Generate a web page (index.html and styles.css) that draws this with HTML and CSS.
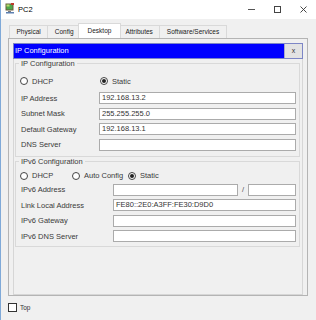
FILE: index.html
```html
<!DOCTYPE html>
<html>
  <head>
    <title>PC2</title>
    <meta charset="UTF-8" />
    <link rel="stylesheet" href="styles.css">
  </head>
  <body>
    <div class="window">
      <div class="titlebar">
        <svg class="app-icon" width="10" height="11" viewBox="0 0 10 11">
          <rect x="0.5" y="0.5" width="8" height="7" fill="#6b5a3a" />
          <rect x="1.5" y="1.5" width="6" height="5" fill="#4fa84a" />
          <rect x="1.5" y="1.5" width="3" height="2" fill="#b8d86a" />
          <rect x="3" y="8" width="3" height="1" fill="#7a7a7a" />
          <rect x="1" y="9" width="8" height="1.5" fill="#5c7fb0" />
          <rect x="6" y="0" width="3" height="2" fill="#c0392b" />
        </svg>
        <span class="title">PC2</span>
        <div class="controls">
          <span class="ctl"><span class="ctl-min"></span></span>
          <span class="ctl"><span class="ctl-max"></span></span>
          <span class="ctl">
            <svg width="7" height="7" viewBox="0 0 7 7">
              <path d="M0.5 0.5 L6.5 6.5 M6.5 0.5 L0.5 6.5" stroke="#333" stroke-width="0.9" />
            </svg>
          </span>
        </div>
      </div>

      <div class="tabs">
        <div class="tab">Physical</div>
        <div class="tab">Config</div>
        <div class="tab active">Desktop</div>
        <div class="tab">Attributes</div>
        <div class="tab">Software/Services</div>
      </div>

      <div class="panel">
        <div class="dialog">
          <div class="dialog-head">
            <div class="dialog-title">IP Configuration</div>
            <div class="dialog-close">x</div>
          </div>

          <fieldset class="group group-v4">
            <legend>IP Configuration</legend>
            <div class="radio-row">
              <label class="radio w80"><span class="dot"></span>DHCP</label>
              <label class="radio"><span class="dot checked"></span>Static</label>
            </div>
            <div class="field">
              <span class="label">IP Address</span>
              <div class="input">192.168.13.2</div>
            </div>
            <div class="field">
              <span class="label">Subnet Mask</span>
              <div class="input">255.255.255.0</div>
            </div>
            <div class="field">
              <span class="label">Default Gateway</span>
              <div class="input">192.168.13.1</div>
            </div>
            <div class="field">
              <span class="label">DNS Server</span>
              <div class="input"></div>
            </div>
          </fieldset>

          <fieldset class="group group-v6">
            <legend>IPv6 Configuration</legend>
            <div class="radio-row">
              <label class="radio w52"><span class="dot"></span>DHCP</label>
              <label class="radio w56"><span class="dot"></span>Auto Config</label>
              <label class="radio"><span class="dot checked"></span>Static</label>
            </div>
            <div class="field">
              <span class="label">IPv6 Address</span>
              <div class="input"></div>
              <span class="slash">/</span>
              <div class="input prefix"></div>
            </div>
            <div class="field">
              <span class="label">Link Local Address</span>
              <div class="input">FE80::2E0:A3FF:FE30:D9D0</div>
            </div>
            <div class="field">
              <span class="label">IPv6 Gateway</span>
              <div class="input"></div>
            </div>
            <div class="field">
              <span class="label">IPv6 DNS Server</span>
              <div class="input"></div>
            </div>
          </fieldset>
        </div>
      </div>

      <div class="footer">
        <span class="checkbox"></span>
        <span class="footer-text">Top</span>
      </div>
    </div>
  </body>
</html>
```

FILE: styles.css
```css
body {
  margin: 0;
  font-family: "Liberation Sans", Arial, sans-serif;
  color: #333;
}

.window {
  width: 315px;
  height: 320px;
  border-left: 1px solid #7fa9d8;
  background-color: #f0f0f0;
  overflow: hidden;
}

.titlebar {
  display: flex;
  align-items: center;
  height: 19px;
  background-color: #fff;
  padding-left: 4px;
}

.app-icon {
  margin-top: -2px;
}

.title {
  font-size: 7.5px;
  color: #000;
  margin-left: 3px;
}

.controls {
  display: flex;
  margin-left: auto;
  height: 100%;
}

.ctl {
  display: flex;
  align-items: center;
  justify-content: center;
  width: 26px;
  height: 100%;
}

.ctl-min {
  width: 7px;
  height: 1px;
  background-color: #555;
}

.ctl-max {
  width: 5px;
  height: 5px;
  border: 1px solid #444;
}

/* tabs */
.tabs {
  display: flex;
  align-items: flex-end;
  height: 14px;
  margin-top: 5px;
  padding-left: 9px;
}

.tab {
  height: 12px;
  line-height: 12px;
  padding: 0 6.5px;
  font-size: 6.5px;
  color: #222;
  border: 1px solid #d9d9d9;
  border-bottom: none;
  background-color: #f0f0f0;
  margin-left: -1px;
}

.tab.active {
  height: 14px;
  line-height: 14px;
  padding: 0 8.5px;
  margin: 0 -2px 0 -3px;
  background-color: #fff;
  position: relative;
}

/* tab panel */
.panel {
  height: 256px;
  margin: 0 8px 0 7px;
  border: 1px solid #b4b4b4;
}

.dialog {
  width: 288px;
  height: 251px;
  margin: 4px 0 0 4px;
  border: 1px solid #d6d6d6;
  border-top: none;
}

.dialog-head {
  display: flex;
  height: 14px;
  margin: 0 -1px;
  border: 1px solid #7d86c6;
}

.dialog-title {
  flex: 1;
  background-color: #0000ff;
  color: #fff;
  font-size: 7.5px;
  line-height: 14px;
  padding-left: 1px;
}

.dialog-close {
  width: 17px;
  border-left: 1px solid #a9a9c9;
  background-color: #e3e3e3;
  color: #333;
  font-size: 7px;
  line-height: 13px;
  text-align: center;
}

/* groups */
.group {
  margin: 0 2px 0 1px;
  border: 1px solid #d9d9d9;
  padding: 8px 3px 5px 5px;
  font-size: 7.5px;
}

.group legend {
  padding: 0 2px;
  margin-left: -2px;
  line-height: 9px;
  color: #3a3a3a;
}

.group-v6 {
  padding-top: 5px;
  padding-bottom: 4px;
}

.radio-row {
  display: flex;
  align-items: center;
  height: 10px;
  margin-left: -1px;
}

.radio {
  display: flex;
  align-items: center;
  gap: 4px;
  color: #3a3a3a;
}

.w80 {
  width: 80px;
}

.w52 {
  width: 52px;
}

.w56 {
  width: 56px;
}

.dot {
  display: flex;
  align-items: center;
  justify-content: center;
  box-sizing: border-box;
  width: 8px;
  height: 8px;
  border: 1px solid #444;
  border-radius: 50%;
  background-color: #fff;
}

.dot.checked::after {
  content: "";
  width: 4px;
  height: 4px;
  border-radius: 50%;
  background-color: #222;
}

.field {
  display: flex;
  align-items: center;
  height: 12px;
  margin-top: 3.5px;
}

.group-v4 .radio-row + .field {
  margin-top: 6px;
}

.group-v6 .radio-row + .field {
  margin-top: 3px;
}

.label {
  flex: none;
  width: 78px;
  color: #3a3a3a;
}

.group-v6 .label {
  width: 92px;
}

.input {
  flex: 1;
  box-sizing: border-box;
  height: 12px;
  border: 1px solid #ababab;
  background-color: #fff;
  padding-left: 2px;
  line-height: 10px;
  color: #333;
}

.slash {
  flex: none;
  width: 10px;
  text-align: center;
  color: #555;
}

.input.prefix {
  flex: none;
  width: 48px;
}

/* footer */
.footer {
  display: flex;
  align-items: center;
  gap: 3px;
  margin: 7px 0 0 7px;
}

.checkbox {
  width: 7px;
  height: 7px;
  border: 1px solid #333;
  background-color: #fff;
}

.footer-text {
  font-size: 6.5px;
  color: #333;
}
```
